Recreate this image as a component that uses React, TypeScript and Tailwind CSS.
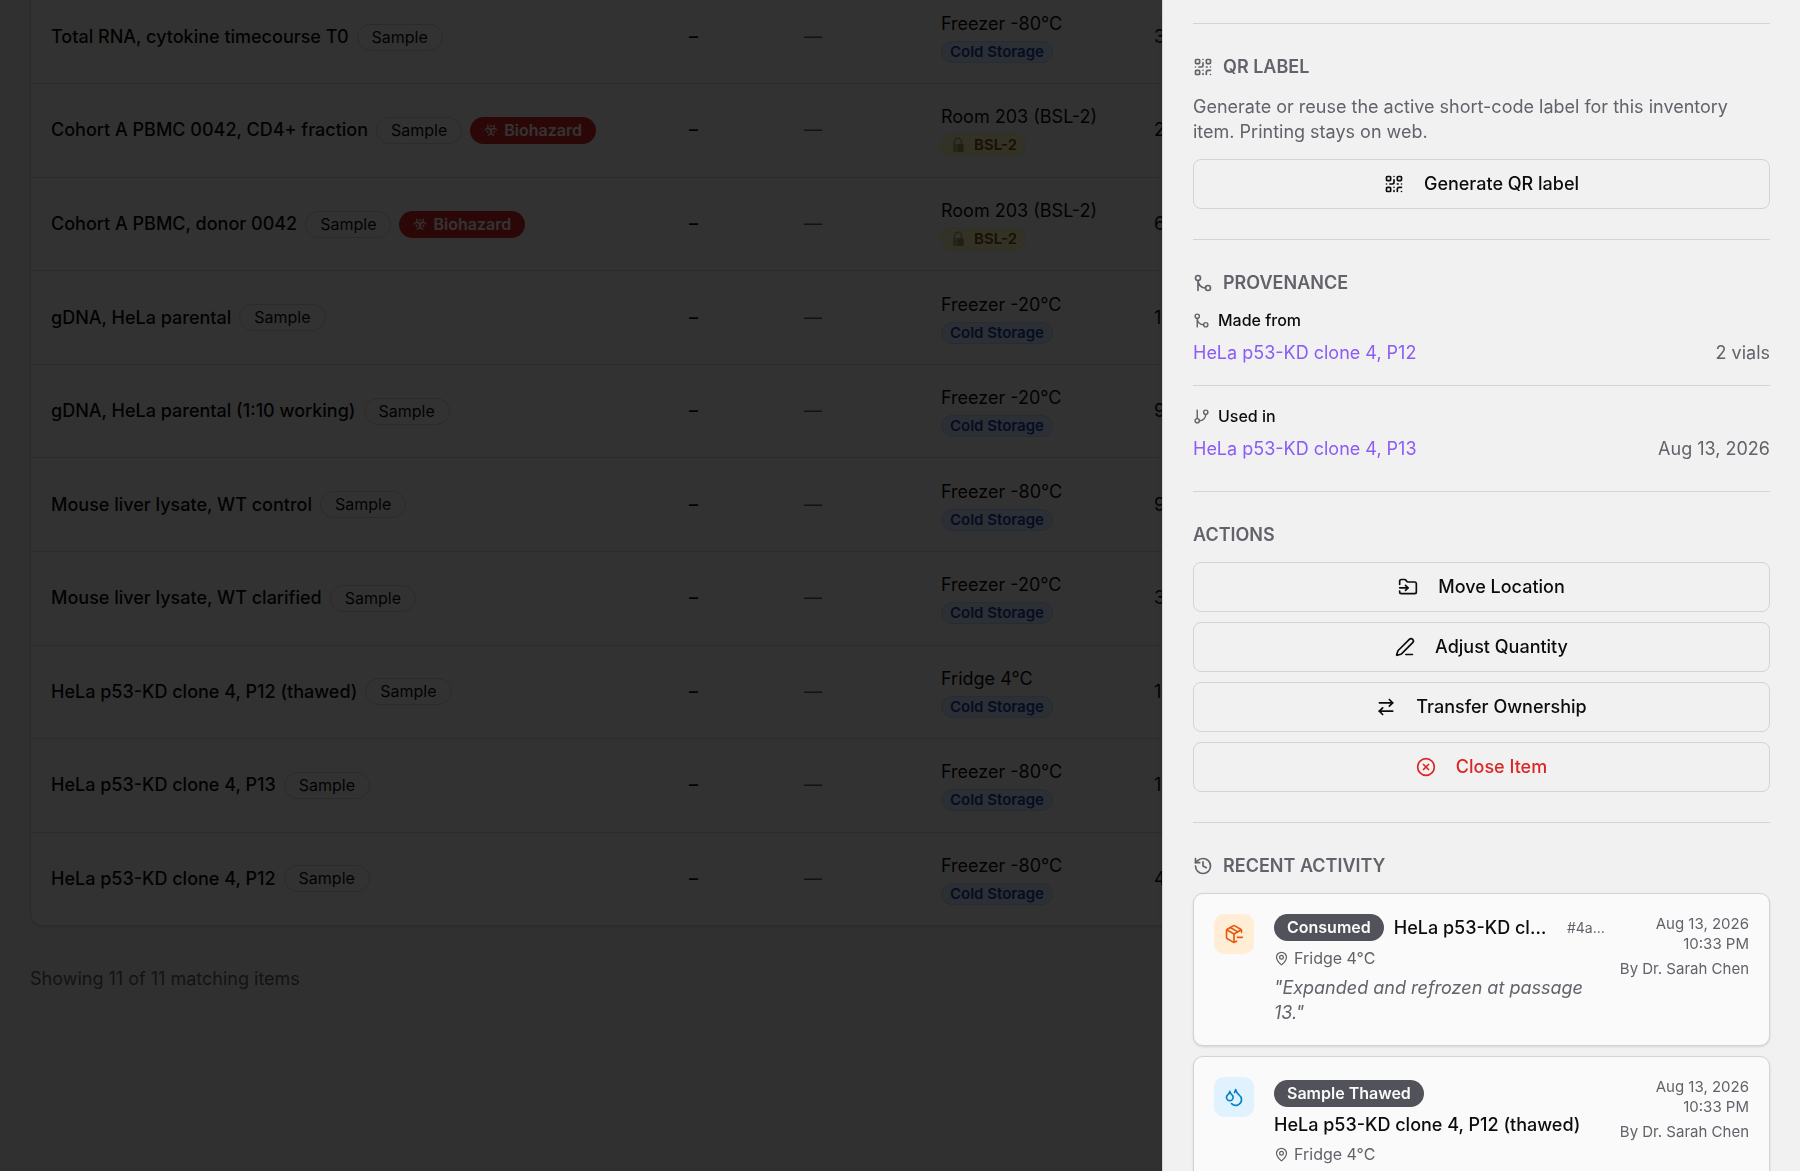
import type { ReactNode } from "react";
import {
  ArrowRightLeft,
  Biohazard,
  CircleX,
  Droplets,
  FolderInput,
  GitBranch,
  GitMerge,
  History,
  MapPin,
  PackageMinus,
  PenLine,
  QrCode,
} from "lucide-react";

interface InventoryItem {
  name: string;
  location: string;
  quantity: number;
  restricted?: boolean;
  biohazard?: boolean;
}

const items: InventoryItem[] = [
  { name: "Total RNA, cytokine timecourse T0", location: "Freezer -80°C", quantity: 3 },
  {
    name: "Cohort A PBMC 0042, CD4+ fraction",
    location: "Room 203 (BSL-2)",
    quantity: 2,
    restricted: true,
    biohazard: true,
  },
  {
    name: "Cohort A PBMC, donor 0042",
    location: "Room 203 (BSL-2)",
    quantity: 6,
    restricted: true,
    biohazard: true,
  },
  { name: "gDNA, HeLa parental", location: "Freezer -20°C", quantity: 11 },
  { name: "gDNA, HeLa parental (1:10 working)", location: "Freezer -20°C", quantity: 9 },
  { name: "Mouse liver lysate, WT control", location: "Freezer -80°C", quantity: 9 },
  { name: "Mouse liver lysate, WT clarified", location: "Freezer -20°C", quantity: 3 },
  { name: "HeLa p53-KD clone 4, P12 (thawed)", location: "Fridge 4°C", quantity: 1 },
  { name: "HeLa p53-KD clone 4, P13", location: "Freezer -80°C", quantity: 1 },
  { name: "HeLa p53-KD clone 4, P12", location: "Freezer -80°C", quantity: 4 },
];

function LockIcon() {
  return (
    <svg viewBox="0 0 16 16" className="size-4" aria-hidden="true">
      <path d="M4.5 8V4.8a3.5 3.5 0 0 1 7 0V8" fill="none" stroke="#a3a8ad" strokeWidth="1.6" />
      <rect x="3" y="7" width="10.5" height="8" rx="1" fill="#c2b280" />
      <rect x="8" y="7" width="5.5" height="8" rx="1" fill="#a3955a" />
    </svg>
  );
}

function LocationBadge({ restricted }: { restricted?: boolean }) {
  if (restricted) {
    return (
      <span className="mt-[5px] flex w-fit items-center gap-2 rounded-full border border-[#fef08a] bg-[#fef9c3] px-2 text-[15px] leading-5 font-semibold text-[#854d0e]">
        <LockIcon />
        BSL-2
      </span>
    );
  }

  return (
    <span className="mt-[5px] flex w-fit items-center rounded-full border border-[#bfdbfe] bg-[#dbeafe] px-2 text-[15px] leading-5 font-semibold text-[#1e40af]">
      Cold Storage
    </span>
  );
}

/**
 * Table of inventory items shown on the page behind the drawer.
 */
function InventoryTable() {
  return (
    <div className="-mt-2.5 overflow-hidden rounded-b-xl border border-[#d4d4d8] bg-[#fafafa] shadow-sm">
      <table className="h-[934px] w-full table-fixed border-collapse text-left">
        <colgroup>
          <col className="w-[638px]" />
          <col className="w-[115px]" />
          <col className="w-[137px]" />
          <col className="w-[213px]" />
          <col />
        </colgroup>
        <tbody>
          {items.map((item) => (
            <tr key={item.name} className="border-b border-[#d4d4d8] last:border-b-0">
              <td className="px-5">
                <div className="flex items-center gap-2">
                  <span className="font-medium">{item.name}</span>
                  <span className="rounded-full border border-[#d4d4d8] px-3.5 text-base leading-[25px]">
                    Sample
                  </span>
                  {item.biohazard && (
                    <span className="inline-flex items-center gap-1.5 rounded-full bg-[#dc2626] px-3.5 text-base leading-[27px] font-semibold text-white">
                      <Biohazard className="size-3.5" />
                      Biohazard
                    </span>
                  )}
                </div>
              </td>
              <td className="px-5 font-medium">–</td>
              <td className="px-5 text-[#62626a]">—</td>
              <td className="px-5">
                <div className="leading-[25px]">{item.location}</div>
                <LocationBadge restricted={item.restricted} />
              </td>
              <td className="px-5">{item.quantity}</td>
            </tr>
          ))}
        </tbody>
      </table>
    </div>
  );
}

interface SectionProps {
  title: string;
  icon?: ReactNode;
  children: ReactNode;
}

function Section({ title, icon, children }: SectionProps) {
  return (
    <section className="flex flex-col gap-[15px] border-t border-[#d4d4d8] py-[30px]">
      <h2 className="flex items-center gap-2.5 leading-[25px] font-semibold text-[#62626a] uppercase">
        {icon}
        {title}
      </h2>
      {children}
    </section>
  );
}

interface ActionButtonProps {
  icon: ReactNode;
  label: string;
  danger?: boolean;
}

function ActionButton({ icon, label, danger }: ActionButtonProps) {
  return (
    <button
      type="button"
      className={`flex h-[50px] w-full items-center justify-center gap-5 rounded-lg border border-[#d4d4d8] font-medium ${
        danger ? "text-[#dc2626]" : "text-[#0c0c0e]"
      }`}
    >
      {icon}
      {label}
    </button>
  );
}

interface LineageProps {
  icon: ReactNode;
  label: string;
  item: string;
  detail: string;
}

function Lineage({ icon, label, item, detail }: LineageProps) {
  return (
    <div className="flex flex-col gap-2.5">
      <h3 className="flex items-center gap-2 text-base leading-5 font-medium">
        {icon}
        {label}
      </h3>
      <div className="flex justify-between leading-[25px]">
        <a href="#item" className="text-[#8b5cf6]">
          {item}
        </a>
        <span className="text-[#62626a]">{detail}</span>
      </div>
    </div>
  );
}

interface ActivityCardProps {
  icon: ReactNode;
  children: ReactNode;
}

/**
 * One entry of the activity feed, with its date and author on the right.
 */
function ActivityCard({ icon, children }: ActivityCardProps) {
  return (
    <li className="flex gap-5 rounded-[10px] border border-[#d4d4d8] bg-[#fafafa] p-5 shadow-sm">
      {icon}
      <div className="flex min-w-0 flex-1 gap-[15px]">
        <div className="flex min-w-0 flex-1 flex-col gap-[7px]">{children}</div>
        <div className="text-right text-[15px] leading-5 text-[#62626a]">
          <div>Aug 13, 2026</div>
          <div>10:33 PM</div>
          <div className="mt-[5px] whitespace-nowrap">By Dr. Sarah Chen</div>
        </div>
      </div>
    </li>
  );
}

function ActivityBadge({ label }: { label: string }) {
  return (
    <span className="shrink-0 rounded-full bg-[#52525b] px-[13px] text-base leading-[27px] font-semibold text-[#fafafa]">
      {label}
    </span>
  );
}

function ActivityLocation({ location }: { location: string }) {
  return (
    <div className="flex items-center gap-[5px] text-base leading-5 text-[#62626a]">
      <MapPin className="size-[15px]" />
      {location}
    </div>
  );
}

function ItemDrawer() {
  return (
    <aside
      role="dialog"
      aria-label="Item details"
      className="fixed inset-y-0 right-0 w-full max-w-[638px] overflow-hidden border-l border-[#d4d4d8] bg-[#f1f1f1] px-[30px] pt-[23px] shadow-lg"
    >
      <Section title="QR Label" icon={<QrCode className="size-5" />}>
        <p className="leading-[25px] text-[#62626a]">
          Generate or reuse the active short-code label for this inventory item. Printing stays on web.
        </p>
        <ActionButton icon={<QrCode className="size-5" />} label="Generate QR label" />
      </Section>

      <Section title="Provenance" icon={<GitMerge className="size-5" />}>
        <div className="border-b border-[#d4d4d8] pb-5">
          <Lineage
            icon={<GitMerge className="size-[17px] text-[#62626a]" />}
            label="Made from"
            item="HeLa p53-KD clone 4, P12"
            detail="2 vials"
          />
        </div>
        <div className="pt-[5px]">
          <Lineage
            icon={<GitBranch className="size-[17px] text-[#62626a]" />}
            label="Used in"
            item="HeLa p53-KD clone 4, P13"
            detail="Aug 13, 2026"
          />
        </div>
      </Section>

      <Section title="Actions">
        <div className="flex flex-col gap-2.5">
          <ActionButton icon={<FolderInput className="size-5" />} label="Move Location" />
          <ActionButton icon={<PenLine className="size-5" />} label="Adjust Quantity" />
          <ActionButton icon={<ArrowRightLeft className="size-5" />} label="Transfer Ownership" />
          <ActionButton icon={<CircleX className="size-5" />} label="Close Item" danger />
        </div>
      </Section>

      <Section title="Recent Activity" icon={<History className="size-5" />}>
        <ul className="flex flex-col gap-2.5">
          <ActivityCard
            icon={
              <span className="flex size-10 shrink-0 items-center justify-center rounded-[10px] bg-[#ffedd5] text-[#ea580c]">
                <PackageMinus className="size-5" />
              </span>
            }
          >
            <div className="flex items-center gap-2.5">
              <ActivityBadge label="Consumed" />
              <span className="flex-1 leading-[25px] font-medium whitespace-nowrap">HeLa p53-KD cl…</span>
              <span className="text-sm text-[#62626a]">#4a…</span>
            </div>
            <ActivityLocation location="Fridge 4°C" />
            <p className="leading-[25px] text-[#62626a] italic">"Expanded and refrozen at passage 13."</p>
          </ActivityCard>

          <ActivityCard
            icon={
              <span className="flex size-10 shrink-0 items-center justify-center rounded-[10px] bg-[#e0f2fe] text-[#0284c7]">
                <Droplets className="size-5" />
              </span>
            }
          >
            <div className="flex flex-col items-start gap-[5px] pt-[3px]">
              <ActivityBadge label="Sample Thawed" />
              <span className="leading-[25px] font-medium whitespace-nowrap">
                HeLa p53-KD clone 4, P12 (thawed)
              </span>
            </div>
            <ActivityLocation location="Fridge 4°C" />
          </ActivityCard>
        </ul>
      </Section>
    </aside>
  );
}

export default function App() {
  return (
    <div className="relative h-screen overflow-hidden bg-[#f1f1f1] font-[Inter,sans-serif] text-lg text-[#0c0c0e]">
      <main className="px-[30px]">
        <InventoryTable />
        <p className="mt-10 leading-[25px] text-[#62626a]">Showing 11 of 11 matching items</p>
      </main>

      <div className="fixed inset-0 bg-black/80" />
      <ItemDrawer />
    </div>
  );
}
